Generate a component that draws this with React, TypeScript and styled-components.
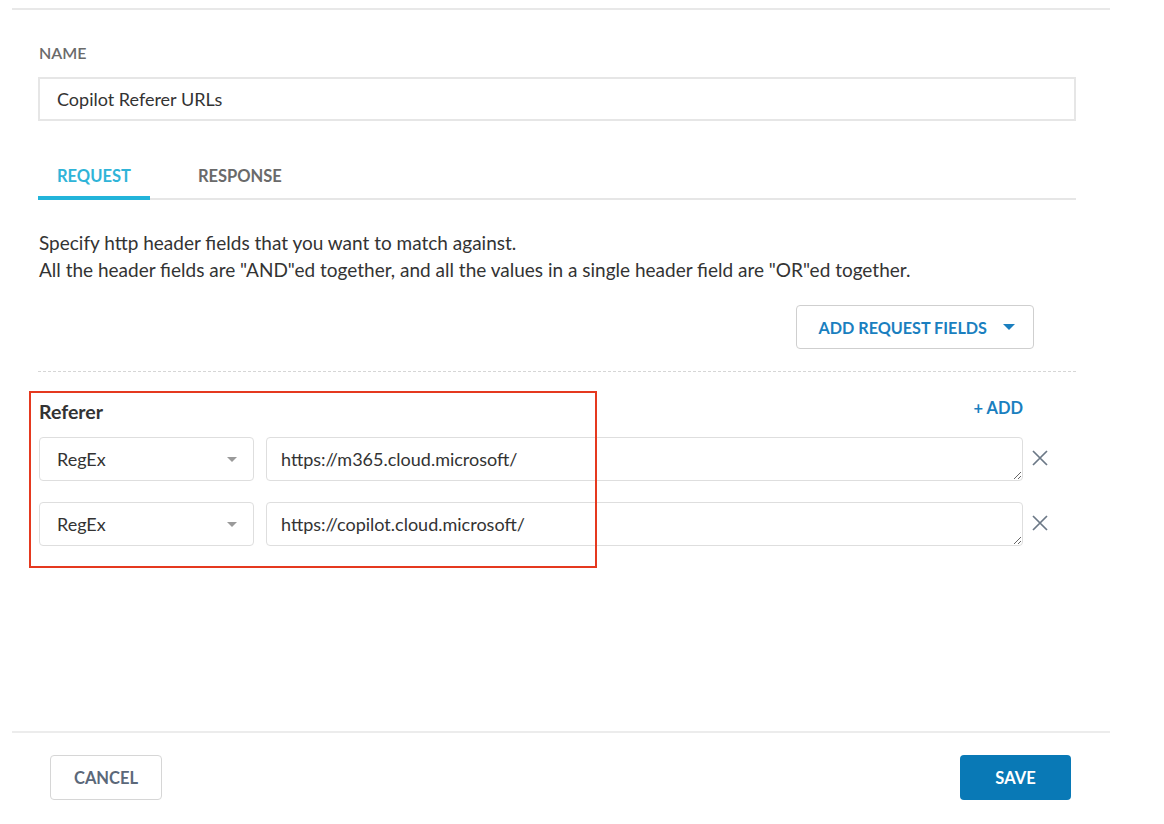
import styled, { createGlobalStyle } from "styled-components";

const GlobalStyle = createGlobalStyle`
    html, body {
        margin: 0;
        padding: 0;
        background: #ffffff;
        font-family: Lato, "Open Sans", sans-serif;
        color: #333333;
    }
`;

interface IMatchRow {
    kind: string,
    value: string
}

const rows: IMatchRow[] = [
    { kind: "RegEx", value: "https://m365.cloud.microsoft/" },
    { kind: "RegEx", value: "https://copilot.cloud.microsoft/" },
];

function App() {
    return (
        <>
            <GlobalStyle />
            <Page>
                <Body>
                    <Label>NAME</Label>
                    <NameInput defaultValue="Copilot Referer URLs" />
                    <TabBar>
                        <Tab active>REQUEST</Tab>
                        <Tab>RESPONSE</Tab>
                    </TabBar>
                    <Description>
                        Specify http header fields that you want to match against.
                        <br />
                        All the header fields are "AND"ed together, and all the values in a single header field are "OR"ed together.
                    </Description>
                    <ActionRow>
                        <OutlineButton>
                            ADD REQUEST FIELDS
                            <Caret color="#1a7fbf" size={6} />
                        </OutlineButton>
                    </ActionRow>
                    <DashedRule />
                    <Section>
                        <Highlight />
                        <SectionHeader>
                            <SectionTitle>Referer</SectionTitle>
                            <LinkButton>+ ADD</LinkButton>
                        </SectionHeader>
                        {rows.map((row, i) => (
                            <MatchRow key={i}>
                                <Select>
                                    {row.kind}
                                    <Caret color="#9a9a9a" size={5} />
                                </Select>
                                <ValueArea defaultValue={row.value} rows={1} />
                                <RemoveButton aria-label="remove">
                                    <svg width="18" height="18" viewBox="0 0 18 18">
                                        <path d="M2 2 L16 16 M16 2 L2 16" stroke="#6b7886" strokeWidth="1.7" fill="none" />
                                    </svg>
                                </RemoveButton>
                            </MatchRow>
                        ))}
                    </Section>
                </Body>
                <Footer>
                    <CancelButton>CANCEL</CancelButton>
                    <SaveButton>SAVE</SaveButton>
                </Footer>
            </Page>
        </>
    );
}

const Page = styled.div`
    width: 1098px;
    margin-left: 12px;
    padding-top: 8px;
`;

const Body = styled.div`
    border-top: 2px solid #e8e8e8;
    padding: 34px 34px 0 26px;
    height: 723px;
    box-sizing: border-box;
`;

const Label = styled.div`
    font-size: 16px;
    font-weight: 600;
    color: #6a6a6a;
    line-height: 18px;
    margin-left: 1px;
`;

const NameInput = styled.input`
    display: block;
    box-sizing: border-box;
    width: 100%;
    height: 44px;
    margin-top: 15px;
    border: 2px solid #e6e6e6;
    padding: 0 17px;
    font-family: Lato, sans-serif;
    font-size: 18px;
    color: #333333;
    outline: none;
`;

const TabBar = styled.div`
    display: flex;
    gap: 29px;
    margin-top: 38px;
    border-bottom: 2px solid #e6e6e6;
`;

const Tab = styled.div<{ active?: boolean }>`
    padding: 7px 19px 0;
    height: 30px;
    font-size: 16.5px;
    font-weight: 700;
    color: ${props => props.active ? "#2fb4d8" : "#6a6a6a"};
    border-bottom: 4px solid ${props => props.active ? "#22b4da" : "transparent"};
    margin-bottom: -2px;
`;

const Description = styled.p`
    margin: 29px 0 0 1px;
    font-size: 19px;
    line-height: 27px;
    color: #333333;
`;

const ActionRow = styled.div`
    display: flex;
    justify-content: flex-end;
    padding-right: 42px;
    margin-top: 22px;
`;

const OutlineButton = styled.button`
    display: flex;
    align-items: center;
    gap: 16px;
    height: 44px;
    padding: 0 18px 0 21px;
    background: #ffffff;
    border: 1px solid #cfcfcf;
    border-radius: 4px;
    font-family: Lato, sans-serif;
    font-size: 16.2px;
    font-weight: 700;
    color: #1a7fbf;
`;

const Caret = styled.span<{ color: string, size: number }>`
    display: inline-block;
    width: 0;
    height: 0;
    border-left: ${props => props.size}px solid transparent;
    border-right: ${props => props.size}px solid transparent;
    border-top: ${props => props.size}px solid ${props => props.color};
`;

const DashedRule = styled.div`
    margin-top: 22px;
    border-top: 1px dashed #d6d6d6;
`;

const Section = styled.div`
    position: relative;
    margin-top: 23px;
`;

const Highlight = styled.div`
    position: absolute;
    left: -9px;
    top: -4px;
    width: 564px;
    height: 173px;
    border: 2px solid #e5391f;
    pointer-events: none;
`;

const SectionHeader = styled.div`
    display: flex;
    justify-content: space-between;
    align-items: center;
    height: 26px;
    padding-right: 53px;
`;

const SectionTitle = styled.div`
    font-size: 19.5px;
    font-weight: 700;
    color: #333333;
    margin-left: 1px;
    margin-top: 6px;
`;

const LinkButton = styled.button`
    background: none;
    border: none;
    padding: 0;
    font-family: Lato, sans-serif;
    font-size: 16.5px;
    font-weight: 700;
    color: #1a7fbf;
`;

const MatchRow = styled.div`
    display: flex;
    align-items: center;
    margin-top: 16px;
    margin-left: 1px;

    & + & {
        margin-top: 21px;
    }
`;

const Select = styled.div`
    display: flex;
    align-items: center;
    justify-content: space-between;
    box-sizing: border-box;
    width: 215px;
    height: 44px;
    margin-right: 12px;
    padding: 0 16px 0 17px;
    border: 1px solid #dedede;
    border-radius: 4px;
    font-size: 18px;
    color: #333333;
    flex-shrink: 0;
`;

const ValueArea = styled.textarea`
    flex: 1;
    box-sizing: border-box;
    height: 44px;
    padding: 11px 14px;
    border: 1px solid #dedede;
    border-radius: 4px;
    font-family: Lato, sans-serif;
    font-size: 18px;
    line-height: 20px;
    color: #333333;
    outline: none;
    resize: vertical;
`;

const RemoveButton = styled.button`
    width: 53px;
    height: 44px;
    padding: 0 0 0 8px;
    background: none;
    border: none;
    display: flex;
    align-items: center;
    justify-content: flex-start;
    flex-shrink: 0;
    margin-top: -2px;
`;

const Footer = styled.div`
    display: flex;
    justify-content: space-between;
    padding: 22px 39px 0 38px;
    border-top: 2px solid #ececec;
`;

const FooterButton = styled.button`
    height: 45px;
    border-radius: 4px;
    font-family: Lato, sans-serif;
    font-size: 16.5px;
    font-weight: 700;
`;

const CancelButton = styled(FooterButton)`
    width: 112px;
    background: #ffffff;
    border: 1px solid #d6d6d6;
    color: #5b6879;
`;

const SaveButton = styled(FooterButton)`
    width: 111px;
    background: #0979b6;
    border: none;
    color: #ffffff;
`;

export default App;
